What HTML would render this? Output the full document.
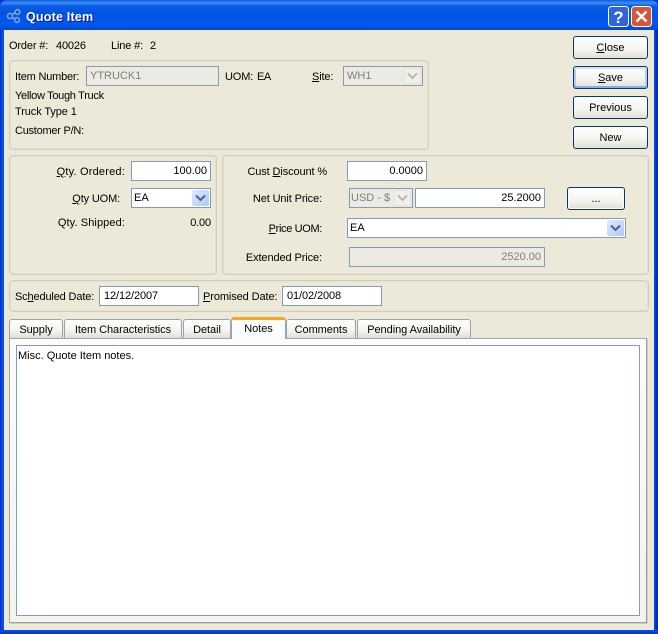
<!DOCTYPE html>
<html><head><meta charset="utf-8"><style>
html,body{margin:0;padding:0;width:658px;height:634px;overflow:hidden;background:#0831d9}
*{box-sizing:border-box}
body{font:11px/13px "Liberation Sans",sans-serif;color:#000;position:relative}
.a{position:absolute;white-space:nowrap;letter-spacing:-.15px;margin-top:1px}
.n{margin-top:0;letter-spacing:0}
.r{text-align:right}
#tb{left:0;top:0;width:658px;height:30px;border-radius:7px 7px 0 0;background:linear-gradient(180deg,#0a5ce0 0,#3e8ff5 3px,#0a5ae6 6px,#0054e3 14px,#0058ee 24px,#0349d0 30px)}
#wf{left:0;top:30px;width:658px;height:604px;background:linear-gradient(90deg,#0034c8 0,#0034c8 1px,#0a50e8 2px,#0a50e8 4px,#0a50e8 654px,#0034c8 656px,#0024a8 658px)}
#cl{left:4px;top:30px;width:650px;height:600px;background:#ece9d8}
#bb{left:0;top:630px;width:658px;height:4px;background:linear-gradient(180deg,#0a50e8,#0034c8)}
#title{left:26px;top:9px;font:bold 12.5px/16px "Liberation Sans",sans-serif;letter-spacing:.2px;color:#fff;text-shadow:1px 1px 0 #0f1089}
.g{position:absolute;border:1px solid #d0cfbc;border-radius:4px;box-shadow:inset 0 0 0 1px #e4e1d0}
.i{position:absolute;border:1px solid #7f9db9;background:#fff;height:20px;padding:0 3px;line-height:19px;white-space:nowrap}
.d{background:#ebebe4;color:#7f7f75}
.b{position:absolute;width:75px;height:23px;border:1px solid #003c74;border-radius:3px;background:linear-gradient(180deg,#fff 0,#f4f3ee 60%,#e3e0d3 100%);text-align:center;line-height:23px}
.f{box-shadow:inset 0 2px 0 #cfe0f8,inset 0 -2px 0 #89ade4,inset 2px 0 0 #b6cdf0,inset -2px 0 0 #b6cdf0}
.ar{position:absolute;width:17px;height:16px;right:1px;top:1px;border-radius:2px;background:linear-gradient(135deg,#e1eafe,#aec7f8)}
.ar.off{background:#f0efe8;border:1px solid #e6e4da}
.ar svg{position:absolute;left:3px;top:4px}
.ar.off svg{left:2px;top:3px}
u{text-decoration:underline}
.t{position:absolute;top:319px;height:19px;border:1px solid #91a7b4;border-bottom:none;border-radius:3px 3px 0 0;background:linear-gradient(180deg,#fff 0,#f3f2ec 65%,#dfddd0 100%);text-align:center;line-height:20px;letter-spacing:-.05px}
#pane{left:9px;top:338px;width:638px;height:285px;margin:0;background:linear-gradient(180deg,#fcfcfe,#f4f3ee);border:1px solid #a0a8aa;border-right:1px solid #9aa0a0;border-bottom:1px solid #9aa0a0;box-shadow:1px 1px 0 #d0cdb9}
</style></head><body>
<div class="a n" id="wf"></div>
<div class="a n" id="tb"></div>
<div class="a n" id="cl"></div>
<div class="a n" id="bb"></div>

<svg class="a n" style="left:6px;top:8px" width="16" height="16" viewBox="0 0 16 16" fill="none" stroke="#7fa2d4" stroke-width="1.6"><circle cx="4" cy="8" r="2.6"/><circle cx="11.5" cy="4" r="2.4"/><circle cx="11" cy="12" r="2.4"/><path d="M6 6.5 9.5 4.5M6 9.5 9 11.5"/></svg>
<div class="a n" id="title">Quote Item</div>

<svg class="a n" style="left:608px;top:6px" width="21" height="21" viewBox="0 0 21 21"><rect x=".5" y=".5" width="20" height="20" rx="3" fill="#2f63e0" stroke="#fff"/><text x="10.5" y="17" text-anchor="middle" font-family="Liberation Sans" font-weight="bold" font-size="17" fill="#fff">?</text></svg>
<svg class="a n" style="left:631px;top:6px" width="21" height="21" viewBox="0 0 21 21"><rect x=".5" y=".5" width="20" height="20" rx="3" fill="#d9553a" stroke="#fff"/><path d="M5.5 5.5 15.5 15.5M15.5 5.5 5.5 15.5" stroke="#fff" stroke-width="2.4" fill="none"/></svg>

<div class="a" style="left:9px;top:39px">Order #:</div>
<div class="a" style="left:56px;top:39px">40026</div>
<div class="a" style="left:111px;top:39px">Line #:</div>
<div class="a" style="left:150px;top:39px">2</div>

<div class="b" style="left:573px;top:36px"><u>C</u>lose</div>
<div class="b f" style="left:573px;top:66px"><u>S</u>ave</div>
<div class="b" style="left:573px;top:96px">Previous</div>
<div class="b" style="left:573px;top:126px">New</div>

<div class="g" style="left:9px;top:60px;width:420px;height:90px"></div>
<div class="a" style="left:15px;top:70px;letter-spacing:-.2px">Item Number:</div>
<div class="i d" style="left:86px;top:66px;width:133px">YTRUCK1</div>
<div class="a" style="left:225px;top:70px">UOM:</div>
<div class="a" style="left:257px;top:70px;letter-spacing:-.5px">EA</div>
<div class="a" style="left:312px;top:70px"><u>S</u>ite:</div>
<div class="i d" style="left:343px;top:66px;width:80px">WH1<span class="ar off"><svg width="11" height="8" viewBox="0 0 11 8" fill="none" stroke="#b9b8ad" stroke-width="2"><path d="M1 1.5 5.5 6 10 1.5"/></svg></span></div>
<div class="a" style="left:15px;top:89px;letter-spacing:-.3px">Yellow Tough Truck</div>
<div class="a" style="left:15px;top:105px;letter-spacing:-.1px">Truck Type 1</div>
<div class="a" style="left:15px;top:124px;letter-spacing:-.25px">Customer P/N:</div>

<div class="g" style="left:9px;top:155px;width:208px;height:120px"></div>
<div class="a r" style="left:25px;top:165px;width:100px;letter-spacing:.2px"><u>Q</u>ty. Ordered:</div>
<div class="i r" style="left:131px;top:161px;width:80px">100.00</div>
<div class="a r" style="left:25px;top:192px;width:95px"><u>Q</u>ty UOM:</div>
<div class="i" style="left:131px;top:188px;width:80px;padding-left:2px">EA<span class="ar"><svg width="11" height="8" viewBox="0 0 11 8" fill="none" stroke="#4d6185" stroke-width="2"><path d="M1 1.5 5.5 6 10 1.5"/></svg></span></div>
<div class="a r" style="left:25px;top:216px;width:100px;letter-spacing:.1px">Qty. Shipped:</div>
<div class="a r" style="left:151px;top:216px;width:60px">0.00</div>

<div class="g" style="left:222px;top:155px;width:427px;height:120px"></div>
<div class="a r" style="left:228px;top:165px;width:99px;letter-spacing:-.12px">Cust <u>D</u>iscount %</div>
<div class="i r" style="left:347px;top:161px;width:80px">0.0000</div>
<div class="a r" style="left:232px;top:192px;width:90px;letter-spacing:-.12px">Net Unit Price:</div>
<div class="i d" style="left:349px;top:188px;width:64px;padding-left:1px">USD - $<span class="ar off"><svg width="11" height="8" viewBox="0 0 11 8" fill="none" stroke="#b9b8ad" stroke-width="2"><path d="M1 1.5 5.5 6 10 1.5"/></svg></span></div>
<div class="i r" style="left:415px;top:188px;width:130px">25.2000</div>
<div class="b" style="left:567px;top:187px;width:58px;box-shadow:inset 0 0 0 1px #fff">...</div>
<div class="a r" style="left:232px;top:222px;width:90px;letter-spacing:-.35px"><u>P</u>rice UOM:</div>
<div class="i" style="left:347px;top:218px;width:279px;padding-left:2px">EA<span class="ar"><svg width="11" height="8" viewBox="0 0 11 8" fill="none" stroke="#4d6185" stroke-width="2"><path d="M1 1.5 5.5 6 10 1.5"/></svg></span></div>
<div class="a r" style="left:232px;top:251px;width:90px;letter-spacing:-.1px">Extended Price:</div>
<div class="i d r" style="left:349px;top:247px;width:196px">2520.00</div>

<div class="g" style="left:9px;top:280px;width:640px;height:32px"></div>
<div class="a" style="left:15px;top:290px;letter-spacing:-.15px">Sc<u>h</u>eduled Date:</div>
<div class="i" style="left:99px;top:286px;width:100px;padding-left:4px;letter-spacing:-.1px">12/12/2007</div>
<div class="a" style="left:203px;top:290px;letter-spacing:-.1px"><u>P</u>romised Date:</div>
<div class="i" style="left:282px;top:286px;width:100px;padding-left:4px;letter-spacing:-.1px">01/02/2008</div>

<div class="a" id="pane"></div>
<div class="t" style="left:9px;width:54px">Supply</div>
<div class="t" style="left:64px;width:118px">Item Characteristics</div>
<div class="t" style="left:183px;width:48px">Detail</div>
<div class="t" style="left:357px;width:114px">Pending Availability</div>
<div class="t" style="left:286px;width:70px">Comments</div>
<div class="t" style="left:231px;top:317px;width:55px;height:22px;background:#fcfcfe;border-top:3px solid #f5a81f;line-height:18px">Notes</div>

<div class="i" style="left:16px;top:345px;width:624px;height:271px;padding:4px 1px;line-height:13px">Misc. Quote Item notes.</div>
</body></html>
